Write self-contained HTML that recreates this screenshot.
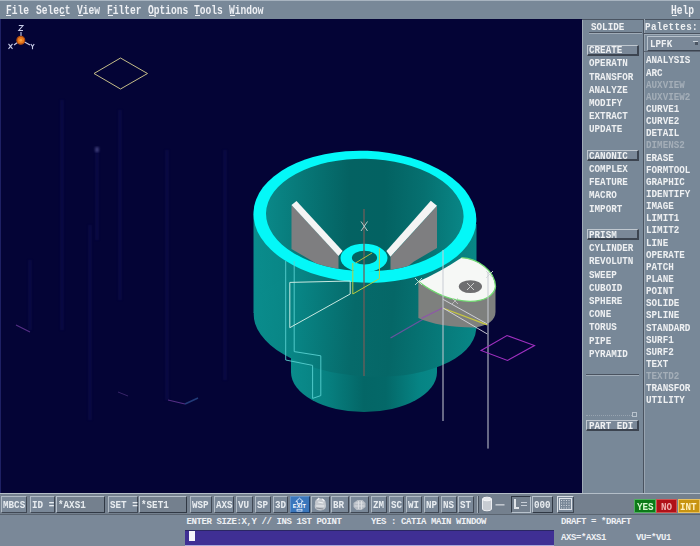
<!DOCTYPE html>
<html><head><meta charset="utf-8">
<style>
*{margin:0;padding:0;box-sizing:border-box}
html,body{width:700px;height:546px;overflow:hidden;background:#788898;font-family:"Liberation Mono",monospace;position:relative}
.a,.vl{position:absolute}
#menu{position:absolute;left:0;top:0;width:700px;height:19px;background:#788898;border-top:1px solid #a8b4c0}
.m{position:absolute;top:3.6px;font-size:12px;font-weight:bold;color:#eef0f4;line-height:1;white-space:pre;transform:scaleX(.8);transform-origin:0 0}
.u{position:absolute;height:1px;background:#eef0f4;top:14px}
#vp{position:absolute;left:0;top:19px;width:582px;height:474px;background:#040436;overflow:hidden}
#panel{position:absolute;left:582px;top:19px;width:118px;height:475px;background:#788898}
.t{position:absolute;font-size:11px;font-weight:bold;letter-spacing:0px;color:#eef0f2;line-height:1;white-space:pre;transform:scaleX(.84);transform-origin:0 0}
.g{color:#a4aeb8}
.btn{position:absolute;border-top:1px solid #c0c8d0;border-left:1px solid #c0c8d0;border-bottom:2px solid #3c4450;border-right:2px solid #3c4450;background:#7a8898}
.tb{position:absolute;top:495px;height:18px;background:#7a8898;border-top:1px solid #b0bac4;border-left:1px solid #b0bac4;border-bottom:1px solid #404854;border-right:1px solid #404854}
.tt{position:absolute;font-size:11px;font-weight:bold;color:#e8ecf0;line-height:1;white-space:pre;transform:scaleX(.84);transform-origin:0 0}
.st{position:absolute;font-size:9px;font-weight:bold;color:#eef0f4;letter-spacing:-0.4px;line-height:1;white-space:pre}
</style></head><body>
<div id="menu">
<div class="m" style="left:6px">File</div><div class="u" style="left:6px;width:5px"></div>
<div class="m" style="left:36px">Select</div><div class="u" style="left:60px;width:5px"></div>
<div class="m" style="left:77px">View</div><div class="u" style="left:78px;width:5px"></div>
<div class="m" style="left:107px">Filter</div><div class="u" style="left:108px;width:5px"></div>
<div class="m" style="left:148px">Options</div><div class="u" style="left:149px;width:5px"></div>
<div class="m" style="left:194px">Tools</div><div class="u" style="left:195px;width:5px"></div>
<div class="m" style="left:229px">Window</div><div class="u" style="left:230px;width:5px"></div>
<div class="m" style="left:671px">Help</div><div class="u" style="left:672px;width:5px"></div>
</div>
<div id="vp">
<svg width="582" height="474" viewBox="0 19 582 474" style="position:absolute;left:0;top:0" shape-rendering="geometricPrecision">
<defs>
<linearGradient id="gb" x1="254" y1="0" x2="476" y2="0" gradientUnits="userSpaceOnUse">
<stop offset="0" stop-color="#0a8c8c"/><stop offset="0.2" stop-color="#088484"/><stop offset="0.45" stop-color="#066a6a"/><stop offset="0.62" stop-color="#056767"/><stop offset="0.85" stop-color="#077a7a"/><stop offset="1" stop-color="#088686"/>
</linearGradient>
<linearGradient id="gl" x1="291" y1="0" x2="437" y2="0" gradientUnits="userSpaceOnUse">
<stop offset="0" stop-color="#0a8c8c"/><stop offset="0.25" stop-color="#078080"/><stop offset="0.5" stop-color="#046666"/><stop offset="0.65" stop-color="#046868"/><stop offset="0.88" stop-color="#068484"/><stop offset="1" stop-color="#088888"/>
</linearGradient>
<linearGradient id="gi" x1="266" y1="0" x2="463" y2="0" gradientUnits="userSpaceOnUse">
<stop offset="0" stop-color="#0a8888"/><stop offset="0.22" stop-color="#077474"/><stop offset="0.42" stop-color="#046262"/><stop offset="0.6" stop-color="#036262"/><stop offset="0.8" stop-color="#067070"/><stop offset="1" stop-color="#098686"/>
</linearGradient>
</defs>
<!-- faint streaks -->
<filter id="bl" x="-50%" y="-5%" width="200%" height="110%"><feGaussianBlur stdDeviation="1"/></filter>
<g stroke="#16165c" stroke-width="2.5" filter="url(#bl)" opacity="0.5">
<line x1="62" y1="100" x2="62" y2="330"/><line x1="97" y1="150" x2="97" y2="240"/><line x1="90" y1="225" x2="90" y2="420"/>
<line x1="167" y1="150" x2="167" y2="400"/><line x1="225" y1="150" x2="225" y2="380"/><line x1="30" y1="260" x2="30" y2="330"/>
<line x1="120" y1="110" x2="120" y2="300"/>
</g>
<rect x="95" y="147" width="4" height="5" fill="#5a5a9a" opacity="0.6" filter="url(#bl)"/>
<!-- left magenta bits -->
<line x1="16" y1="325" x2="30" y2="332" stroke="#6a3a9a" stroke-width="1.2" opacity="0.8"/>
<line x1="118" y1="392" x2="128" y2="396" stroke="#5a3a8a" stroke-width="1" opacity="0.6"/>
<line x1="168" y1="400" x2="185" y2="404" stroke="#6a3a9a" stroke-width="1.2" opacity="0.8"/>
<line x1="185" y1="404" x2="198" y2="398" stroke="#2a4a8a" stroke-width="1.5" opacity="0.8"/>
<!-- axis triad -->
<rect x="0" y="19" width="1" height="474" fill="#1e2064"/>
<g stroke="#c8cce8" stroke-width="1.1" fill="none">
<line x1="21" y1="40" x2="21" y2="32"/>
<line x1="21" y1="40" x2="14" y2="45"/>
<line x1="21" y1="40" x2="30" y2="45"/>
<path d="M18.8,25.5 L23,25.5 L18.8,30.5 L23,30.5"/>
<path d="M8.5,43.8 L12.5,48.8 M12.5,43.8 L8.5,48.8"/>
<path d="M30.8,44 L32.5,46.5 L34.2,44 M32.5,46.5 L32.5,49.2"/>
</g>
<circle cx="20.8" cy="40.3" r="3.9" fill="#e87a1c" stroke="#b04a10" stroke-width="1.2"/>
<circle cx="20.8" cy="40.3" r="1.4" fill="#f8a040"/>
<!-- yellow diamond -->
<polygon points="94,73.5 120.5,58 147.5,73.5 120.5,89" fill="none" stroke="#c4bc88" stroke-width="1"/>
<!-- lower cylinder -->
<path d="M291,330 L291,372 A73,40 0 0 0 437,372 L437,330 Z" fill="url(#gl)"/>
<!-- upper body -->
<polygon points="253.5,214 476.5,224 476.5,329 253.5,313" fill="url(#gb)"/>
<ellipse cx="365" cy="321" rx="111.5" ry="55.4" transform="rotate(4.2 365 321)" fill="url(#gb)"/>
<ellipse cx="364.9" cy="216.7" rx="111.5" ry="65.9" transform="rotate(2.3 364.9 216.7)" fill="#04f8f8"/>
<!-- subtle lower cylinder top shade -->
<path d="M291,360 A73,20 0 0 0 437,360 L437,372 A73,40 0 0 1 291,372 Z" fill="#0a8080" opacity="0"/>
<!-- inner bowl -->
<ellipse cx="364.8" cy="215" rx="98.8" ry="56.2" transform="rotate(1.1 364.8 215)" fill="url(#gi)"/>
<!-- blades -->
<clipPath id="ci"><ellipse cx="364.8" cy="215" rx="98.8" ry="56.2" transform="rotate(1.1 364.8 215)"/></clipPath>
<g clip-path="url(#ci)">
<polygon points="291.5,205 338.5,256 338.5,280 313,261.5 291.5,249" fill="#7e7e80"/>
<polygon points="291.5,205 296.5,201 342.6,251 338.5,256" fill="#f4f4f4"/>
<polygon points="437,206 390.5,257 390.5,280 414,261.5 437,248" fill="#7e7e80"/>
<polygon points="430.8,200.7 437,205.7 390.5,256.7 386.4,251" fill="#f4f4f4"/>
</g>
<!-- hub -->
<ellipse cx="364" cy="258" rx="23.5" ry="14.3" fill="#04f8f8"/>
<ellipse cx="364.5" cy="257.7" rx="12.6" ry="6.9" fill="#036463"/>
<!-- center vertical line -->
<line x1="364" y1="209" x2="364" y2="376" stroke="#6e5e5a" stroke-width="1.3"/>
<!-- X marker -->
<path d="M361,221.5 L367.5,231 M367.5,221.5 L361,231" stroke="#c8d4d4" stroke-width="0.9"/>
<!-- cyan wire -->
<polyline points="285.7,261 285.7,360 312.6,365.4 312.6,398.4" fill="none" stroke="#58d0d0" stroke-width="0.9"/>
<polyline points="294.2,261 294.2,351.6 320.8,355.8 320.8,395.6 312.6,398.4" fill="none" stroke="#58d0d0" stroke-width="0.9"/>
<!-- white triangle -->
<polyline points="289.8,282.4 350.2,281 350.2,294 289.8,327.7 289.8,282.4" fill="none" stroke="#c8e8e0" stroke-width="1"/>
<!-- yellow parallelogram -->
<polyline points="352.8,263 352.8,294 379.4,278.6 379.4,248.4" fill="none" stroke="#b8cc40" stroke-width="1"/>
<line x1="355.5" y1="263" x2="372" y2="253" stroke="#b8b840" stroke-width="1"/>
<!-- magenta line -->
<line x1="390.5" y1="338" x2="443" y2="307.7" stroke="#7850a8" stroke-width="1.3" opacity="0.85"/>
<!-- lug -->
<path d="M418.4,281.5 L418.4,318 C432,324 450,327.5 474,327.5 C488,326 495.5,320 495.5,312 L495.5,286.6 Z" fill="#7e807e"/>
<path d="M418.4,281.5 Q440,272 461.5,257.7 C477,258.5 495,270 495.5,287.5 C494,296 484,301.4 470,301.4 C450,301 432,292 418.4,281.5 Z" fill="#f6f8f6"/>
<path d="M418.4,281.5 C432,292 450,301 470,301.4 C484,301.4 494,296 495.5,286.6 C495,270 477,258.5 461.5,257.7" fill="none" stroke="#70d870" stroke-width="1.3"/>
<ellipse cx="470.4" cy="286.6" rx="11.6" ry="6.4" fill="#6e6e70"/>
<path d="M467,283 L474,290 M474,283 L467,290" stroke="#d8d8d8" stroke-width="0.9"/>
<path d="M415,278 L422,285 M422,278 L415,285" stroke="#c8e0d8" stroke-width="0.9"/>
<path d="M486,271 L493,278 M493,271 L486,278" stroke="#d0d8d8" stroke-width="0.9"/>
<!-- lug lines -->
<line x1="442.8" y1="299.2" x2="487.3" y2="324" stroke="#d8d8e0" stroke-width="0.9"/>
<line x1="443.3" y1="308.3" x2="487.3" y2="324.9" stroke="#c8c840" stroke-width="1.2"/>
<line x1="443" y1="308" x2="487.3" y2="334" stroke="#d8d8e0" stroke-width="0.9"/>
<line x1="421.5" y1="318.4" x2="443" y2="307.7" stroke="#9050b0" stroke-width="1.2" opacity="0.8"/>
<path d="M452,298 L458,304 M458,298 L452,304" stroke="#c8c8c8" stroke-width="0.8"/>
<line x1="443" y1="250" x2="443" y2="421" stroke="#c8ccd4" stroke-width="1"/>
<line x1="488" y1="272" x2="488" y2="448.6" stroke="#c8ccd4" stroke-width="1"/>
<!-- magenta parallelogram -->
<polygon points="481,350.5 507,335.5 534.5,345.5 507.5,360.5" fill="none" stroke="#a030c0" stroke-width="1.1"/>
<!-- other magenta bits -->
</svg>
</div>
<div id="panel">
<div class="vl" style="left:0;top:0;width:118px;height:1px;background:#4a5462"></div>
<div class="vl" style="left:0;top:1px;width:1px;height:474px;background:#a0acb8"></div>
<div class="vl" style="left:61px;top:0;width:1px;height:475px;background:#4a5360"></div>
<div class="vl" style="left:62px;top:0;width:1px;height:475px;background:#98a4b0"></div>
</div>
<div class="t" style="left:591px;top:22.2px;">SOLIDE</div>
<div class="a" style="left:589px;top:32px;width:53px;height:1px;background:#4a5360"></div>
<div class="a" style="left:589px;top:33px;width:53px;height:1px;background:#a0acb8"></div>
<div class="t" style="left:645px;top:21.7px;letter-spacing:0.4px">Palettes:</div>
<div class="a" style="left:644px;top:33px;width:56px;height:1px;background:#4a5360"></div>
<div class="a" style="left:644px;top:34px;width:56px;height:1px;background:#a0acb8"></div>
<div class="a" style="left:647px;top:36px;width:53px;height:15px;border-top:1px solid #b8c2cc;border-left:1px solid #b8c2cc;border-bottom:1px solid #3c4450;background:#7a8898"></div>
<div class="t" style="left:650px;top:38.7px;">LPFK</div>
<div class="a" style="left:693px;top:41px;width:5px;height:1px;background:#c8d0d8"></div><div class="a" style="left:695px;top:42px;width:3px;height:3px;background:#4a5462"></div>
<div class="a" style="left:644px;top:51px;width:56px;height:1px;background:#5a6472"></div>
<div class="btn" style="left:587px;top:44.5px;width:52px;height:11px"></div>
<div class="t" style="left:588.5px;top:45.2px;">CREATE</div>
<div class="t" style="left:588.5px;top:58.4px;">OPERATN</div>
<div class="t" style="left:588.5px;top:71.6px;">TRANSFOR</div>
<div class="t" style="left:588.5px;top:84.8px;">ANALYZE</div>
<div class="t" style="left:588.5px;top:98.0px;">MODIFY</div>
<div class="t" style="left:588.5px;top:111.2px;">EXTRACT</div>
<div class="t" style="left:588.5px;top:124.4px;">UPDATE</div>
<div class="btn" style="left:587px;top:150.1px;width:52px;height:11px"></div>
<div class="t" style="left:588.5px;top:150.8px;">CANONIC</div>
<div class="t" style="left:588.5px;top:164.0px;">COMPLEX</div>
<div class="t" style="left:588.5px;top:177.2px;">FEATURE</div>
<div class="t" style="left:588.5px;top:190.4px;">MACRO</div>
<div class="t" style="left:588.5px;top:203.6px;">IMPORT</div>
<div class="btn" style="left:587px;top:229.3px;width:52px;height:11px"></div>
<div class="t" style="left:588.5px;top:230.0px;">PRISM</div>
<div class="t" style="left:588.5px;top:243.2px;">CYLINDER</div>
<div class="t" style="left:588.5px;top:256.4px;">REVOLUTN</div>
<div class="t" style="left:588.5px;top:269.6px;">SWEEP</div>
<div class="t" style="left:588.5px;top:282.8px;">CUBOID</div>
<div class="t" style="left:588.5px;top:296.0px;">SPHERE</div>
<div class="t" style="left:588.5px;top:309.2px;">CONE</div>
<div class="t" style="left:588.5px;top:322.4px;">TORUS</div>
<div class="t" style="left:588.5px;top:335.6px;">PIPE</div>
<div class="t" style="left:588.5px;top:348.8px;">PYRAMID</div>
<div class="t" style="left:646px;top:55.4px;">ANALYSIS</div>
<div class="t" style="left:646px;top:67.5px;">ARC</div>
<div class="t g" style="left:646px;top:79.7px;">AUXVIEW</div>
<div class="t g" style="left:646px;top:91.8px;">AUXVIEW2</div>
<div class="t" style="left:646px;top:104.0px;">CURVE1</div>
<div class="t" style="left:646px;top:116.1px;">CURVE2</div>
<div class="t" style="left:646px;top:128.2px;">DETAIL</div>
<div class="t g" style="left:646px;top:140.4px;">DIMENS2</div>
<div class="t" style="left:646px;top:152.5px;">ERASE</div>
<div class="t" style="left:646px;top:164.7px;">FORMTOOL</div>
<div class="t" style="left:646px;top:176.8px;">GRAPHIC</div>
<div class="t" style="left:646px;top:188.9px;">IDENTIFY</div>
<div class="t" style="left:646px;top:201.1px;">IMAGE</div>
<div class="t" style="left:646px;top:213.2px;">LIMIT1</div>
<div class="t" style="left:646px;top:225.4px;">LIMIT2</div>
<div class="t" style="left:646px;top:237.5px;">LINE</div>
<div class="t" style="left:646px;top:249.6px;">OPERATE</div>
<div class="t" style="left:646px;top:261.8px;">PATCH</div>
<div class="t" style="left:646px;top:273.9px;">PLANE</div>
<div class="t" style="left:646px;top:286.1px;">POINT</div>
<div class="t" style="left:646px;top:298.2px;">SOLIDE</div>
<div class="t" style="left:646px;top:310.3px;">SPLINE</div>
<div class="t" style="left:646px;top:322.5px;">STANDARD</div>
<div class="t" style="left:646px;top:334.6px;">SURF1</div>
<div class="t" style="left:646px;top:346.8px;">SURF2</div>
<div class="t" style="left:646px;top:358.9px;">TEXT</div>
<div class="t g" style="left:646px;top:371.0px;">TEXTD2</div>
<div class="t" style="left:646px;top:383.2px;">TRANSFOR</div>
<div class="t" style="left:646px;top:395.3px;">UTILITY</div>
<div class="a" style="left:586px;top:374px;width:53px;height:1px;background:#4a5360"></div>
<div class="a" style="left:586px;top:375px;width:53px;height:1px;background:#a0acb8"></div>
<div class="a" style="left:586px;top:415px;width:46px;height:1px;border-top:1px dotted #98a4b0"></div>
<div class="a" style="left:632px;top:412px;width:5px;height:5px;border:1px solid #b8c2cc"></div>
<div class="btn" style="left:586px;top:420px;width:53px;height:11px"></div>
<div class="t" style="left:589px;top:420.7px;">PART EDI</div>
<div class="a" style="left:0;top:493px;width:700px;height:1px;background:#b4bec8"></div>
<div class="a" style="left:0;top:494px;width:700px;height:20px;background:#74808e"></div>
<div class="a" style="left:0;top:514px;width:700px;height:1px;background:#5a6470"></div>
<div class="a" style="left:0;top:515px;width:700px;height:31px;background:#7a8898"></div>
<div class="tb" style="left:1px;width:26px;top:496px;height:17px"></div>
<div class="tt" style="left:3px;top:500.3px">MBCS</div>
<div class="tb" style="left:30px;width:25px;top:496px;height:17px"></div>
<div class="tt" style="left:32px;top:500.3px">ID =</div>
<div class="tb" style="left:55.5px;width:49.5px;top:496px;height:17px;background:#74808e;border-color:#b8c2cc #303844 #303844 #b8c2cc"></div>
<div class="tt" style="left:57.5px;top:500.3px">*AXS1</div>
<div class="tb" style="left:108px;width:29.5px;top:496px;height:17px"></div>
<div class="tt" style="left:110px;top:500.3px">SET =</div>
<div class="tb" style="left:139px;width:48px;top:496px;height:17px;background:#74808e;border-color:#b8c2cc #303844 #303844 #b8c2cc"></div>
<div class="tt" style="left:141px;top:500.3px">*SET1</div>
<div class="tb" style="left:190px;width:22px;top:496px;height:17px"></div>
<div class="tt" style="left:192px;top:500.3px">WSP</div>
<div class="tb" style="left:214px;width:20px;top:496px;height:17px"></div>
<div class="tt" style="left:216px;top:500.3px">AXS</div>
<div class="tb" style="left:236px;width:16.5px;top:496px;height:17px"></div>
<div class="tt" style="left:238px;top:500.3px">VU</div>
<div class="tb" style="left:254.5px;width:16.5px;top:496px;height:17px"></div>
<div class="tt" style="left:256.5px;top:500.3px">SP</div>
<div class="tb" style="left:272.5px;width:15.5px;top:496px;height:17px"></div>
<div class="tt" style="left:274.5px;top:500.3px">3D</div>
<div class="tb" style="left:289.5px;width:20.0px;top:496px;height:17px;background:#3a76bc;border-color:#6090c8 #1c3c68 #1c3c68 #6090c8"></div>
<svg class="a" style="left:0;top:0" width="700" height="546" viewBox="0 0 700 546"><path d="M299.5,498.2 L303.2,501.6 L301.6,501.6 L301.6,503.6 L297.4,503.6 L297.4,501.6 L295.8,501.6 Z" fill="none" stroke="#e8f0ff" stroke-width="0.9"/><text x="299.5" y="508.3" font-size="5.6" font-family="Liberation Sans" font-weight="bold" fill="#ffffff" text-anchor="middle" letter-spacing="0.3">EXIT</text><rect x="297" y="509.3" width="5" height="1.8" fill="none" stroke="#e0e8f8" stroke-width="0.8"/></svg>
<div class="tb" style="left:311px;width:18.5px;top:496px;height:17px"></div>
<svg class="a" style="left:0;top:0" width="700" height="546" viewBox="0 0 700 546"><g transform="translate(320.25,505)"><path d="M-5,-1 C-6,-5 -3,-7 0,-6.5 C3,-7 6,-5 5.5,-1 C6.5,2 5,5.5 0,5.5 C-5,5.5 -6.5,2 -5,-1 Z" fill="#c4c8ce"/><path d="M-3,-5 L-1,-7 M2,-6 L4,-4 M-4,1 L4,1 M-2,-3 L3,-2" stroke="#f0f2f4" stroke-width="1.2"/><path d="M-4,3 L3,4" stroke="#8a9098" stroke-width="1"/></g></svg>
<div class="tb" style="left:330.5px;width:18.0px;top:496px;height:17px"></div>
<div class="tt" style="left:332.5px;top:500.3px">BR</div>
<div class="tb" style="left:350px;width:19px;top:496px;height:17px"></div>
<svg class="a" style="left:0;top:0" width="700" height="546" viewBox="0 0 700 546"><g transform="translate(359.5,505)"><path d="M-6,-2 L-2,-5 L3,-5 L6,-2 L6,2 L2,5 L-3,5 L-6,2 Z" fill="#b8bec6"/><path d="M-4,-2 L4,-2 M-5,1 L5,1 M-1,-4 L-1,4 M2,-4 L2,4" stroke="#dde0e4" stroke-width="0.9"/></g></svg>
<div class="tb" style="left:370.5px;width:16.5px;top:496px;height:17px"></div>
<div class="tt" style="left:372.5px;top:500.3px">ZM</div>
<div class="tb" style="left:388.5px;width:15.5px;top:496px;height:17px"></div>
<div class="tt" style="left:390.5px;top:500.3px">SC</div>
<div class="tb" style="left:406px;width:15.5px;top:496px;height:17px"></div>
<div class="tt" style="left:408px;top:500.3px">WI</div>
<div class="tb" style="left:423.5px;width:15.0px;top:496px;height:17px"></div>
<div class="tt" style="left:425.5px;top:500.3px">NP</div>
<div class="tb" style="left:440.5px;width:16.5px;top:496px;height:17px"></div>
<div class="tt" style="left:442.5px;top:500.3px">NS</div>
<div class="tb" style="left:458px;width:16px;top:496px;height:17px"></div>
<div class="tt" style="left:460px;top:500.3px">ST</div>
<div class="a" style="left:477px;top:496px;width:1px;height:17px;background:#a8b2bc"></div>
<div class="a" style="left:478px;top:496px;width:1px;height:17px;background:#4a5460"></div>
<svg class="a" style="left:480px;top:496px" width="30" height="17" viewBox="0 0 30 17"><path d="M2.5 3 L2.5 13 A4.5 1.8 0 0 0 11.5 13 L11.5 3" fill="#c8ccd2" stroke="#eceef2" stroke-width="1"/><ellipse cx="7" cy="3" rx="4.5" ry="1.8" fill="#e8eaee" stroke="#f4f4f6" stroke-width="1"/><rect x="15.5" y="8" width="9" height="1.6" fill="#c0c6ce"/></svg>
<div class="tb" style="left:511px;width:20px;top:496px;height:17px;background:#74808e;border-color:#303844 #b8c2cc #b8c2cc #303844"></div>
<div class="a" style="left:514px;top:499px;width:2px;height:10px;background:#dfe3e8"></div><div class="a" style="left:514px;top:507px;width:5px;height:2px;background:#dfe3e8"></div>
<div class="a" style="left:521px;top:502px;width:6px;height:1px;background:#c8ced6"></div><div class="a" style="left:521px;top:505px;width:6px;height:1px;background:#c8ced6"></div>
<div class="tb" style="left:531.5px;width:21px;top:496px;height:17px;background:#74808e;border-color:#b8c2cc #303844 #303844 #b8c2cc"></div>
<div class="tt" style="left:533.5px;top:500.3px">000</div>
<div class="tb" style="left:556.5px;width:17.5px;top:496px;height:17px;border-color:#d8dee4 #404854 #404854 #d8dee4"></div>
<svg class="a" style="left:556.5px;top:496px" width="18" height="17" viewBox="0 0 18 17"><rect x="2.5" y="2.5" width="12" height="11" fill="none" stroke="#e0e4ea" stroke-width="1"/><rect x="4.0" y="4.0" width="1" height="1" fill="#d0d6de"/><rect x="4.0" y="6.5" width="1" height="1" fill="#d0d6de"/><rect x="4.0" y="9.0" width="1" height="1" fill="#d0d6de"/><rect x="4.0" y="11.5" width="1" height="1" fill="#d0d6de"/><rect x="6.5" y="4.0" width="1" height="1" fill="#d0d6de"/><rect x="6.5" y="6.5" width="1" height="1" fill="#d0d6de"/><rect x="6.5" y="9.0" width="1" height="1" fill="#d0d6de"/><rect x="6.5" y="11.5" width="1" height="1" fill="#d0d6de"/><rect x="9.0" y="4.0" width="1" height="1" fill="#d0d6de"/><rect x="9.0" y="6.5" width="1" height="1" fill="#d0d6de"/><rect x="9.0" y="9.0" width="1" height="1" fill="#d0d6de"/><rect x="9.0" y="11.5" width="1" height="1" fill="#d0d6de"/><rect x="11.5" y="4.0" width="1" height="1" fill="#d0d6de"/><rect x="11.5" y="6.5" width="1" height="1" fill="#d0d6de"/><rect x="11.5" y="9.0" width="1" height="1" fill="#d0d6de"/><rect x="11.5" y="11.5" width="1" height="1" fill="#d0d6de"/></svg>
<div class="a" style="left:634px;top:498.5px;width:21.5px;height:14px;background:#0c7a18;border:1px solid #50b060"></div>
<div class="t" style="left:637px;top:502px;color:#d8f8d0">YES</div>
<div class="a" style="left:656px;top:498.5px;width:21px;height:14px;background:#b01018;border:1px solid #d05050"></div>
<div class="t" style="left:661px;top:502px;color:#f0b0b0">NO</div>
<div class="a" style="left:678px;top:498.5px;width:22px;height:14px;background:#c89410;border:1px solid #e8c060"></div>
<div class="t" style="left:680px;top:502px;color:#fff0c0">INT</div>
<div class="st" style="left:186.5px;top:518px">ENTER SIZE:X,Y // INS 1ST POINT</div>
<div class="st" style="left:371px;top:518px">YES : CATIA MAIN WINDOW</div>
<div class="st" style="left:561px;top:518px">DRAFT = *DRAFT</div>
<div class="st" style="left:561px;top:533.5px">AXS=*AXS1</div>
<div class="st" style="left:636px;top:533.5px">VU=*VU1</div>
<div class="a" style="left:185px;top:530px;width:369px;height:14.5px;background:#3f2f94;border-top:1px solid #2a2664"></div>
<div class="a" style="left:185px;top:544.5px;width:369px;height:1.5px;background:#a8a8d8"></div>
<div class="a" style="left:188.5px;top:531px;width:6px;height:10px;background:#f4f4fa"></div>
</body></html>
